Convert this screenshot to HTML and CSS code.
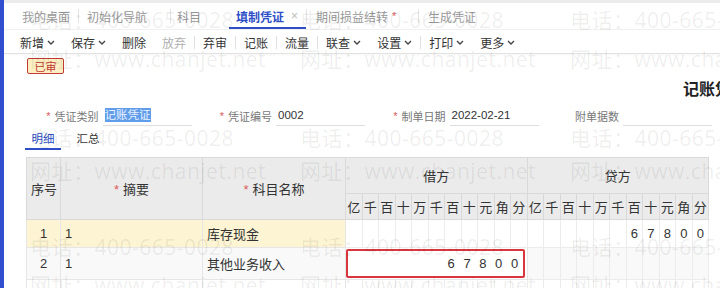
FILE: index.html
```html
<!DOCTYPE html>
<html lang="zh">
<head>
<meta charset="utf-8">
<title>填制凭证</title>
<link rel="stylesheet" href="styles.css">
</head>
<body>
<div class="app">
  <aside class="rail"></aside>
  <div class="main">
    <nav class="tabs">
      <div class="tab t1">我的桌面</div>
      <i class="tsep"></i>
      <div class="tab t2">初始化导航</div>
      <i class="tsep"></i>
      <div class="tab t3">科目</div>
      <div class="tab t4 active">填制凭证<span class="close">×</span></div>
      <i class="tsep"></i>
      <div class="tab t5">期间损益结转<span class="dot">*</span></div>
      <i class="tsep"></i>
      <div class="tab t6">生成凭证</div>
    </nav>

    <div class="toolbar">
      <span class="btn">新增<svg class="caret" viewBox="0 0 8 5"><path d="M1 1 4 4 7 1"/></svg></span>
      <span class="btn">保存<svg class="caret" viewBox="0 0 8 5"><path d="M1 1 4 4 7 1"/></svg></span>
      <span class="btn">删除</span>
      <span class="btn off">放弃</span>
      <i class="bsep"></i>
      <span class="btn">弃审</span>
      <i class="bsep"></i>
      <span class="btn">记账</span>
      <i class="bsep"></i>
      <span class="btn">流量</span>
      <i class="bsep"></i>
      <span class="btn">联查<svg class="caret" viewBox="0 0 8 5"><path d="M1 1 4 4 7 1"/></svg></span>
      <span class="btn">设置<svg class="caret" viewBox="0 0 8 5"><path d="M1 1 4 4 7 1"/></svg></span>
      <i class="bsep"></i>
      <span class="btn">打印<svg class="caret" viewBox="0 0 8 5"><path d="M1 1 4 4 7 1"/></svg></span>
      <span class="btn">更多<svg class="caret" viewBox="0 0 8 5"><path d="M1 1 4 4 7 1"/></svg></span>
    </div>

    <div class="stamp-row"><span class="stamp">已审</span></div>
    <div class="title-row"><h1 class="title">记账凭证</h1></div>

    <div class="form-row">
      <div class="field"><span class="req">*</span><label>凭证类别</label><div class="input"><span class="sel">记账凭证</span></div></div>
      <div class="field"><span class="req">*</span><label>凭证编号</label><div class="input">0002</div></div>
      <div class="field"><span class="req">*</span><label>制单日期</label><div class="input">2022-02-21</div></div>
      <div class="field"><label>附单据数</label><div class="input"></div></div>
    </div>

    <div class="subtabs">
      <span class="stab on">明细</span>
      <span class="stab">汇总</span>
    </div>

    <table class="voucher">
      <colgroup>
        <col class="c-no"><col class="c-sum"><col class="c-acc">
        <col class="c-d"><col class="c-d"><col class="c-d"><col class="c-d"><col class="c-d"><col class="c-d"><col class="c-d"><col class="c-d"><col class="c-d"><col class="c-d"><col class="c-d">
        <col class="c-d"><col class="c-d"><col class="c-d"><col class="c-d"><col class="c-d"><col class="c-d"><col class="c-d"><col class="c-d"><col class="c-d"><col class="c-d"><col class="c-d">
      </colgroup>
      <thead>
        <tr class="h1">
          <th rowspan="2" class="left">序号</th>
          <th rowspan="2"><span class="req">*</span>摘要</th>
          <th rowspan="2"><span class="req">*</span>科目名称</th>
          <th colspan="11">借方</th>
          <th colspan="11">贷方</th>
        </tr>
        <tr class="h2">
          <th>亿</th><th>千</th><th>百</th><th>十</th><th>万</th><th>千</th><th>百</th><th>十</th><th>元</th><th>角</th><th>分</th>
          <th>亿</th><th>千</th><th>百</th><th>十</th><th>万</th><th>千</th><th>百</th><th>十</th><th>元</th><th>角</th><th>分</th>
        </tr>
      </thead>
      <tbody>
        <tr class="r1">
          <td class="no">1</td><td class="txt">1</td><td class="txt">库存现金</td>
          <td class="d"></td><td class="d"></td><td class="d"></td><td class="d"></td><td class="d"></td><td class="d"></td><td class="d"></td><td class="d"></td><td class="d"></td><td class="d"></td><td class="d"></td>
          <td class="d"></td><td class="d"></td><td class="d"></td><td class="d"></td><td class="d"></td><td class="d"></td><td class="d">6</td><td class="d">7</td><td class="d">8</td><td class="d">0</td><td class="d">0</td>
        </tr>
        <tr class="r2">
          <td class="no">2</td><td class="txt">1</td><td class="txt">其他业务收入</td>
          <td colspan="11" class="edit">
            <div class="editor">
              <span></span><span></span><span></span><span></span><span></span><span></span><span>6</span><span>7</span><span>8</span><span>0</span><span>0</span>
            </div>
          </td>
          <td class="d"></td><td class="d"></td><td class="d"></td><td class="d"></td><td class="d"></td><td class="d"></td><td class="d"></td><td class="d"></td><td class="d"></td><td class="d"></td><td class="d"></td>
        </tr>
        <tr class="r3">
          <td class="no"></td><td class="txt"></td><td class="txt"></td>
          <td class="d"></td><td class="d"></td><td class="d"></td><td class="d"></td><td class="d"></td><td class="d"></td><td class="d"></td><td class="d"></td><td class="d"></td><td class="d"></td><td class="d"></td>
          <td class="d"></td><td class="d"></td><td class="d"></td><td class="d"></td><td class="d"></td><td class="d"></td><td class="d"></td><td class="d"></td><td class="d"></td><td class="d"></td><td class="d"></td>
        </tr>
      </tbody>
    </table>
  </div>

  <div class="watermarks" aria-hidden="true">
    <span class="wm" style="left:30px;top:7px">电话：400-665-0028</span>
    <span class="wm" style="left:300px;top:7px">电话：400-665-0028</span>
    <span class="wm" style="left:570px;top:7px">电话：400-665-0028</span>
    <span class="wm" style="left:30px;top:46px">网址：www.chanjet.net</span>
    <span class="wm" style="left:300px;top:46px">网址：www.chanjet.net</span>
    <span class="wm" style="left:570px;top:46px">网址：www.chanjet.net</span>
    <span class="wm" style="left:30px;top:125px">电话：400-665-0028</span>
    <span class="wm" style="left:300px;top:125px">电话：400-665-0028</span>
    <span class="wm" style="left:570px;top:125px">电话：400-665-0028</span>
    <span class="wm" style="left:30px;top:158px">网址：www.chanjet.net</span>
    <span class="wm" style="left:300px;top:158px">网址：www.chanjet.net</span>
    <span class="wm" style="left:570px;top:158px">网址：www.chanjet.net</span>
    <span class="wm" style="left:30px;top:234px">电话：400-665-0028</span>
    <span class="wm" style="left:300px;top:234px">电话：400-665-0028</span>
    <span class="wm" style="left:570px;top:234px">电话：400-665-0028</span>
    <span class="wm" style="left:30px;top:272px">网址：www.chanjet.net</span>
    <span class="wm" style="left:300px;top:272px">网址：www.chanjet.net</span>
    <span class="wm" style="left:570px;top:272px">网址：www.chanjet.net</span>
  </div>
</div>
</body>
</html>
```

FILE: styles.css
```css
* { box-sizing: border-box; }
html, body { margin: 0; padding: 0; }
body {
  font-family: "Liberation Sans", "Noto Sans CJK SC", sans-serif;
  color: #333;
  background: #fff;
}
.app {
  position: relative;
  display: flex;
  width: 720px;
  height: 288px;
  overflow: hidden;
}
.rail { flex: none; width: 4px; background: #2f4fcf; }
.main { flex: 1; min-width: 0; }

/* top tabs */
.tabs {
  display: flex;
  align-items: center;
  height: 30px;
  border-top: 3px solid #ececec;
  border-bottom: 1px solid #f0f0f0;
  font-size: 12px;
  color: #999;
  white-space: nowrap;
}
.tab {
  flex: none;
  display: flex;
  align-items: center;
  height: 26px;
}
.t1 { width: 74px; padding-left: 18px; }
.t2 { width: 91px; padding-left: 8px; }
.t3 { width: 58px; padding-left: 6px; }
.t4 { width: 77px; padding-left: 7px; }
.t5 { width: 111px; padding-left: 9px; }
.t6 { padding-left: 9px; }
.tab.active {
  color: #2d4ec6;
  font-weight: bold;
  border-bottom: 2px solid #2d4ec6;
  padding-top: 2px;
}
.close { font-weight: normal; color: #bbb; margin-left: 7px; font-size: 12px; }
.dot { color: #e05a5a; margin-left: 4px; font-size: 11px; }
.tsep { flex: none; width: 1px; height: 14px; background: #e4e4e4; }

/* toolbar */
.toolbar {
  display: flex;
  align-items: center;
  height: 24px;
  padding: 2px 0 0 8px;
  border-bottom: 1px solid #e2e2e2;
  box-shadow: 0 1px 2px rgba(0,0,0,0.04);
  font-size: 12px;
  white-space: nowrap;
}
.btn { display: flex; align-items: center; padding: 0 8px; color: #333; }
.btn.off { color: #b0b0b0; }
.caret { width: 8px; height: 5px; margin-left: 3px; fill: none; stroke: #444; stroke-width: 1.4; }
.bsep { flex: none; width: 1px; height: 13px; background: #e0e0e0; }

/* stamp + title */
.stamp-row { display: flex; margin: 4px 0 0 23px; }
.stamp {
  display: flex;
  align-items: center;
  justify-content: center;
  width: 37px;
  height: 16px;
  background: #fcefc3;
  border: 1.5px solid #c23a31;
  border-radius: 2px;
  color: #c23a31;
  font-size: 11px;
}
.title-row { margin-top: 6px; height: 20px; padding-left: 679px; white-space: nowrap; }
.title { margin: 0; font-size: 16px; line-height: 20px; font-weight: bold; color: #222; }

/* form row */
.form-row { display: flex; margin-top: 6px; padding-left: 14px; font-size: 11px; }
.field {
  flex: none;
  width: 173.5px;
  display: flex;
  align-items: center;
  justify-content: flex-end;
  height: 20px;
}
.req { color: #e05a5a; margin-right: 4px; }
.field label { color: #777; }
.input {
  width: 89px;
  height: 20px;
  margin-left: 4px;
  padding-left: 2px;
  border-bottom: 1px solid #dedede;
  line-height: 19px;
  color: #333;
  font-size: 11.5px;
}
.sel { background: #5f9cea; color: #eaf2ff; padding: 1px 0; }

/* subtabs */
.subtabs { display: flex; margin: 1px 0 0 21px; font-size: 11.5px; }
.stab {
  width: 36px;
  height: 23px;
  display: flex;
  align-items: center;
  justify-content: center;
  border-bottom: 2px solid transparent;
  color: #333;
}
.stab.on { color: #2d4ec6; border-bottom-color: #2d4ec6; }
.stab + .stab { margin-left: 9px; }

/* voucher table */
.voucher {
  margin: 7px 0 0 22px;
  width: 682px;
  table-layout: fixed;
  border-collapse: collapse;
  font-size: 13px;
}
.c-no { width: 34px; }
.c-sum { width: 142px; }
.c-acc { width: 143px; }
.c-d { width: 16.5px; }
.voucher th {
  background: #ebebeb;
  border: 1px solid #d9d9d9;
  font-weight: normal;
  color: #333;
  padding: 0;
}
.voucher th.left { text-align: left; padding-left: 4px; }
.voucher .h1 { height: 36px; }
.voucher .h2 { height: 26px; }
.voucher .h2 th { font-size: 13px; }
.voucher td {
  border: 1px solid #e6e6e6;
  padding: 0;
  white-space: nowrap;
  overflow: hidden;
}
.voucher td.no { text-align: center; }
.voucher td.txt { padding-left: 4px; }
.voucher td.d { text-align: center; border-color: #ececec; }
.r1 { height: 28px; }
.r1 td.no, .r1 td.txt { background: #fcf4d2; }
.r2 { height: 31px; background: #f9f9f9; }
.r3 { height: 28px; }
.voucher td.edit { padding: 1px 2px 1px 0; background: #fff; }
.editor {
  display: grid;
  grid-template-columns: repeat(11, 1fr);
  align-items: center;
  height: 29px;
  border: 2px solid #d9363e;
  border-radius: 2px;
  text-align: center;
}

/* watermark overlay */
.watermarks { position: absolute; inset: 0; pointer-events: none; }
.wm {
  position: absolute;
  font-family: "Open Sans", "Noto Sans CJK SC", sans-serif;
  font-size: 21px;
  line-height: 26px;
  letter-spacing: 0.5px;
  color: rgba(0,0,0,0.075);
  white-space: nowrap;
}
```
